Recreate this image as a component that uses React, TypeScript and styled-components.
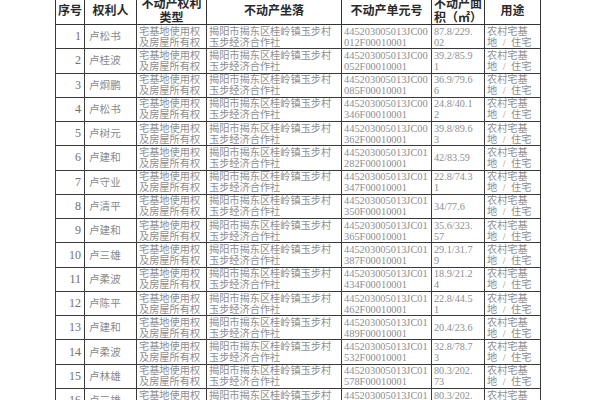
import React from "react";
import styled, { createGlobalStyle } from "styled-components";

const Global = createGlobalStyle`
  html, body { margin: 0; padding: 0; background: #ffffff; overflow: hidden; }
  body { width: 600px; height: 400px; }
`;

const Page = styled.div`
  width: 600px;
  height: 400px;
  overflow: hidden;
  background: #fff;
  padding-left: 55px;
  box-sizing: border-box;
`;

const Table = styled.table`
  margin-top: -6px;
  border-collapse: collapse;
  table-layout: fixed;
  width: 478px;
  font-family: "Liberation Serif", "Noto Sans CJK SC", serif;
`;

const HeadCell = styled.th<{ w: number }>`
  width: ${(p) => p.w}px;
  height: 29px;
  border: 1.5px solid #333;
  padding: 0;
  font-family: "Noto Sans CJK SC", sans-serif;
  font-weight: 700;
  font-size: 12px;
  line-height: 13.5px;
  color: #2a2a2a;
  text-align: center;
  vertical-align: middle;
  overflow: hidden;
`;

const Row = styled.tr`
  height: 24.27px;
`;

const Cell = styled.td<{ align?: string; pad?: number }>`
  border: 1.5px solid #3a3a3a;
  padding: 0 ${(p) => (p.align === "right" ? 3 : 0)}px 0 ${(p) => p.pad ?? 2}px;
  font-size: 10.2px;
  line-height: 11px;
  color: #8e8e8e;
  text-align: ${(p) => p.align ?? "left"};
  vertical-align: middle;
  white-space: nowrap;
  overflow: hidden;
`;

const Num = styled.span`
  font-family: "Liberation Serif", serif;
  font-size: 12px;
  color: #707070;
`;

const Name = styled.span`
  font-size: 10.6px;
  color: #8a8a8a;
`;

const Line = styled.div`
  height: 11px;
`;

const Code = styled.div`
  height: 11px;
  font-size: 10.4px;
`;

const Use = styled.div`
  height: 11px;
  word-spacing: 3px;
`;

type R = { n: number; name: string; code: string; area: string[] };

const rows: R[] = [
  { n: 1, name: "卢松书", code: "JC00|012F", area: ["87.8/229.", "02"] },
  { n: 2, name: "卢桂波", code: "JC00|052F", area: ["39.2/85.9", "1"] },
  { n: 3, name: "卢炯鹏", code: "JC00|085F", area: ["36.9/79.6", "6"] },
  { n: 4, name: "卢松书", code: "JC00|346F", area: ["24.8/40.1", "2"] },
  { n: 5, name: "卢树元", code: "JC00|362F", area: ["39.8/89.6", "3"] },
  { n: 6, name: "卢建和", code: "JC01|282F", area: ["42/83.59"] },
  { n: 7, name: "卢守业", code: "JC01|347F", area: ["22.8/74.3", "1"] },
  { n: 8, name: "卢清平", code: "JC01|350F", area: ["34/77.6"] },
  { n: 9, name: "卢建和", code: "JC01|365F", area: ["35.6/323.", "57"] },
  { n: 10, name: "卢三雄", code: "JC01|387F", area: ["29.1/31.7", "9"] },
  { n: 11, name: "卢柔波", code: "JC01|434F", area: ["18.9/21.2", "4"] },
  { n: 12, name: "卢陈平", code: "JC01|462F", area: ["22.8/44.5", "1"] },
  { n: 13, name: "卢建和", code: "JC01|489F", area: ["20.4/23.6"] },
  { n: 14, name: "卢柔波", code: "JC01|532F", area: ["32.8/78.7", "3"] },
  { n: 15, name: "卢林雄", code: "JC01|578F", area: ["80.3/202.", "73"] },
  { n: 16, name: "卢三雄", code: "JC01|579F", area: ["80.3/202.", "73"] },
];

export default function App() {
  return (
    <Page>
      <Global />
      <Table>
        <thead>
          <tr>
            <HeadCell w={28}>序号</HeadCell>
            <HeadCell w={51}>权利人</HeadCell>
            <HeadCell w={69}>
              不动产权利
              <br />
              类型
            </HeadCell>
            <HeadCell w={134}>不动产坐落</HeadCell>
            <HeadCell w={89}>不动产单元号</HeadCell>
            <HeadCell w={52}>
              不动产面
              <br />
              积（㎡）
            </HeadCell>
            <HeadCell w={55}>用途</HeadCell>
          </tr>
        </thead>
        <tbody>
          {rows.map((r) => {
            const [jc, f] = r.code.split("|");
            return (
              <Row key={r.n}>
                <Cell align="right">
                  <Num>{r.n}</Num>
                </Cell>
                <Cell pad={4}>
                  <Name>{r.name}</Name>
                </Cell>
                <Cell>
                  <Line>宅基地使用权</Line>
                  <Line>及房屋所有权</Line>
                </Cell>
                <Cell>
                  <Line>揭阳市揭东区桂岭镇玉步村</Line>
                  <Line>玉步经济合作社</Line>
                </Cell>
                <Cell>
                  <Code>445203005013{jc}</Code>
                  <Code>{f}00010001</Code>
                </Cell>
                <Cell>
                  {r.area.map((a, i) => (
                    <Line key={i}>{a}</Line>
                  ))}
                </Cell>
                <Cell>
                  <Line>农村宅基</Line>
                  <Use>地 / 住宅</Use>
                </Cell>
              </Row>
            );
          })}
        </tbody>
      </Table>
    </Page>
  );
}
